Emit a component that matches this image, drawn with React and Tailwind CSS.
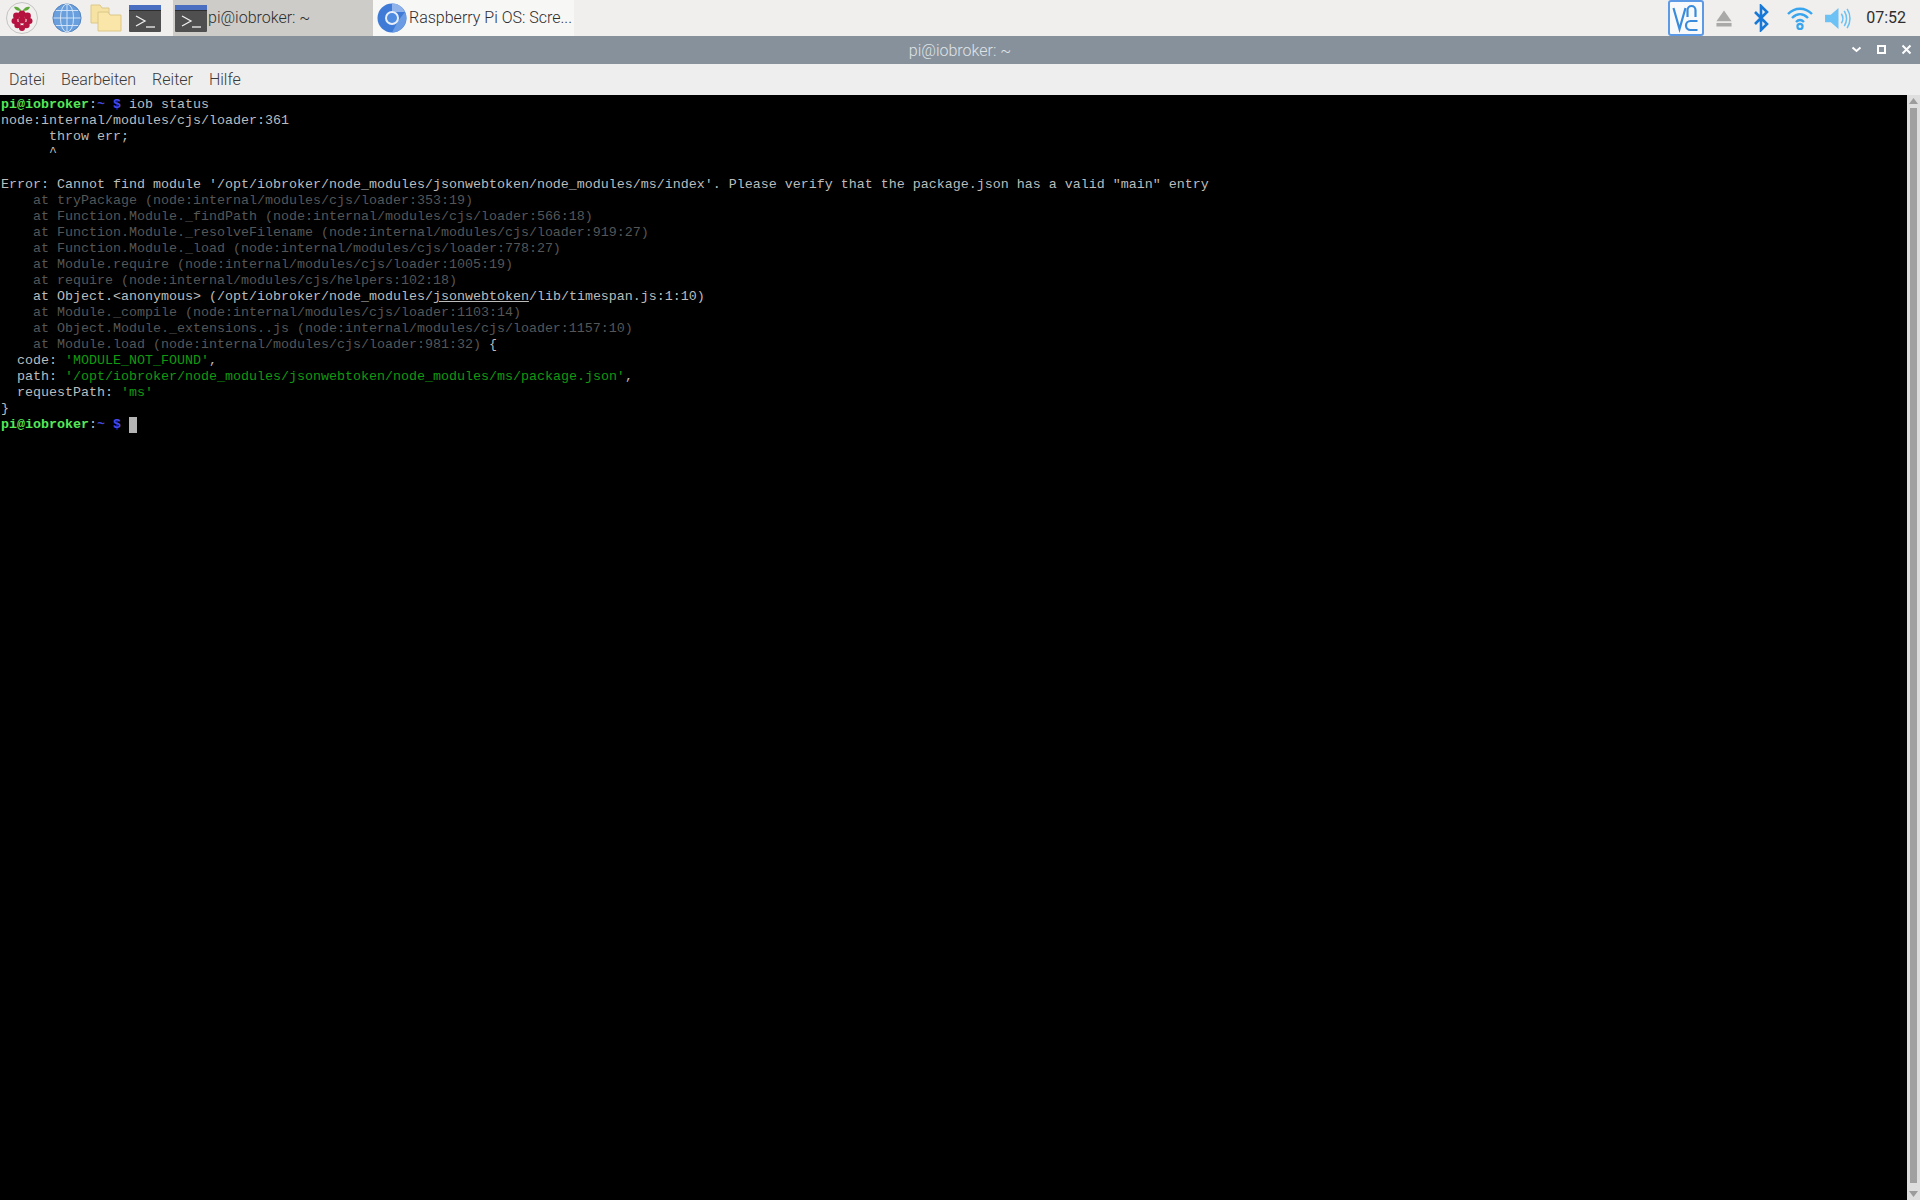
import React from 'react';

const Raspberry = () => (
  <div className="w-[32px] h-[32px] rounded-full bg-[#f1f0ee] border border-[#c4c4c2] flex items-center justify-center">
    <svg width="24" height="28" viewBox="0 0 24 28">
      <path d="M11 6C9 3 6 2 4 3c1 3 4 4 7 4zM13 6c2-3 5-4 7-3-1 3-4 4-7 4z" fill="#5fa83b" />
      <g fill="#b5123f">
        <circle cx="12" cy="10" r="3.6" />
        <circle cx="6.5" cy="12" r="3.4" />
        <circle cx="17.5" cy="12" r="3.4" />
        <circle cx="4.5" cy="17" r="3" />
        <circle cx="19.5" cy="17" r="3" />
        <circle cx="12" cy="16" r="3.6" />
        <circle cx="7.5" cy="21" r="3.2" />
        <circle cx="16.5" cy="21" r="3.2" />
        <circle cx="12" cy="24" r="3" />
      </g>
    </svg>
  </div>
);

const Globe = () => (
  <svg width="30" height="30" viewBox="0 0 32 32">
    <circle cx="16" cy="16" r="15" fill="#6a9fde" stroke="#4f7fb8" />
    <g stroke="#d6e6f8" strokeWidth="1" fill="none">
      <ellipse cx="16" cy="16" rx="7" ry="15" />
      <path d="M16 1v30M1.5 16h29M4 8h24M4 24h24" />
    </g>
  </svg>
);

const Folder = () => (
  <svg width="32" height="28" viewBox="0 0 32 28">
    <path d="M1 1h9l2 3h7v15H1z" fill="#f6e3a4" stroke="#dcc788" />
    <path d="M8 8h10l2 3h11v16H8z" fill="#f9e6a8" stroke="#dcc788" />
  </svg>
);

const TermIcon = () => (
  <svg width="32" height="27" viewBox="0 0 32 27">
    <rect x="0" y="0" width="32" height="27" rx="1" fill="#4f4f4f" />
    <rect x="0" y="0" width="32" height="5" fill="#4a6fc0" />
    <rect x="0" y="5" width="32" height="1" fill="#2e2e2e" />
    <path d="M7 11l9 5-9 5" fill="none" stroke="#eeeeee" strokeWidth="1.3" />
    <path d="M17 22h9" stroke="#eeeeee" strokeWidth="1.3" />
  </svg>
);

const Chromium = () => (
  <svg width="30" height="30" viewBox="0 0 30 30">
    <circle cx="15" cy="15" r="14.5" fill="#3f7ad6" />
    <path d="M15 .5A14.5 14.5 0 0 1 28 9H15z" fill="#8fb3ea" />
    <path d="M28 9a14.5 14.5 0 0 1-13 20.5L21 18z" fill="#6b9be3" />
    <circle cx="15" cy="15" r="7" fill="#e9eff9" />
    <circle cx="15" cy="15" r="5" fill="#4f8be0" />
  </svg>
);

const Vnc = () => (
  <div className="w-[36px] h-[36px] rounded-[3px] border-2 border-[#5c9ae6] bg-[#f8f9fb] flex items-center justify-center">
    <svg width="30" height="30" viewBox="0 0 29 30" fill="none" stroke="#3a8bdc" strokeWidth="2.2">
      <path d="M2 5l6 21 6-21" />
      <path d="M16 14V7a4 4 0 0 1 8 0v7" />
      <path d="M26 18h-7a3.5 3.5 0 0 0 0 9h7" />
    </svg>
  </div>
);

const Eject = () => (
  <svg width="16" height="17" viewBox="0 0 18 18" fill="#a9a9a7">
    <path d="M9 0l8.5 12H.5z" />
    <rect x="0.5" y="14" width="17" height="4" />
  </svg>
);

const Bluetooth = () => (
  <svg width="16" height="28" viewBox="0 0 16 28" fill="none" stroke="#1878d8" strokeWidth="2.6">
    <path d="M2 8l12 12-6 6V2l6 6L2 20" />
  </svg>
);

const Wifi = () => (
  <svg width="26" height="24" viewBox="0 0 26 24" fill="none" stroke="#39a5ee" strokeWidth="2.4">
    <path d="M1 8c7-7 17-7 24 0M5 12c5-5 11-5 16 0M9 16c2.500-2.500 5.500-2.500 8 0" />
    <circle cx="13" cy="20.500" r="2.600" strokeWidth="2.200" />
  </svg>
);

const Volume = () => (
  <svg width="26" height="23" viewBox="0 1 27 24" fill="none">
    <path d="M0 9h6l8-7v22l-8-7H0z" fill="#6cc1f5" />
    <path d="M17 8c2 3 2 7 0 10M20 5c3 5 3 11 0 16M23 3c4 6 4 14 0 20" stroke="#6cc1f5" strokeWidth="1.600" />
  </svg>
);

const WinButtons = () => (
  <div className="flex items-center gap-[12px] text-white">
    <svg width="13" height="13" viewBox="0 0 13 13" fill="none" stroke="#fff" strokeWidth="2"><path d="M2.500 4.500l4 3.500 4-3.500" /></svg>
    <svg width="13" height="13" viewBox="0 0 13 13" fill="none" stroke="#fff" strokeWidth="2"><rect x="3" y="3" width="7" height="7" /></svg>
    <svg width="13" height="13" viewBox="0 0 13 13" fill="none" stroke="#fff" strokeWidth="2"><path d="M2.500 2.500l8 8M10.500 2.500l-8 8" /></svg>
  </div>
);

const Prompt = () => (
  <>
    <span className="text-[#55e855] font-bold">pi@iobroker</span>
    <span className="text-[#c0c0c0]">:</span>
    <span className="text-[#3f46d8] font-bold">~</span>
    <span> </span>
    <span className="text-[#4a4ae8] font-bold">$</span>
    <span> </span>
  </>
);

const Dim = ({ children }) => <div className="text-[#565656] h-[16px]">{children}</div>;
const Line = ({ children }) => <div className="h-[16px]">{children}</div>;
const Green = ({ children }) => <span className="text-[#109a10]">{children}</span>;

const App = () => {
  return (
    <div className="w-[1920px] h-[1200px] flex flex-col overflow-hidden bg-black font-['Roboto',sans-serif] font-light">
      <div className="h-[36px] bg-[#f0efed] flex items-center">
        <div className="w-[52px] pl-[6px]"><Raspberry /></div>
        <Globe />
        <div className="ml-[8px]"><Folder /></div>
        <div className="ml-[7px]"><TermIcon /></div>
        <div className="ml-[12px] w-[200px] h-[36px] bg-[#cdccc8] flex items-center pl-[2px] text-[16px] text-[#2e2e2e] gap-[1px] whitespace-nowrap">
          <TermIcon />
          <span>pi@iobroker: ~</span>
        </div>
        <div className="w-[201px] h-[36px] bg-[#f7f7f6] flex items-center pl-[4px] gap-[2px] text-[16px] text-[#2e2e2e] whitespace-nowrap">
          <Chromium />
          <span>Raspberry Pi OS: Scre...</span>
        </div>
        <div className="ml-auto flex items-center h-[36px]">
          <Vnc />
          <div className="ml-[12px]"><Eject /></div>
          <div className="ml-[21px]"><Bluetooth /></div>
          <div className="ml-[18px]"><Wifi /></div>
          <div className="ml-[12px]"><Volume /></div>
          <span className="ml-[15px] mr-[14px] text-[16px] font-normal text-[#2e2e2e]">07:52</span>
        </div>
      </div>

      <div className="h-[28px] bg-[#87919b] flex items-center justify-center relative text-[16px] text-[#dfe3e7] pt-[1px]">
        <span>pi@iobroker: ~</span>
        <div className="absolute right-[7px] top-[7px]"><WinButtons /></div>
      </div>

      <div className="h-[31px] bg-[#eeeeee] flex items-center pl-[9px] gap-[16px] text-[16px] text-[#3a3a3a]">
        <span>Datei</span>
        <span>Bearbeiten</span>
        <span>Reiter</span>
        <span>Hilfe</span>
      </div>

      <div className="flex-1 flex min-h-0">
        <div className="flex-1 bg-black pt-[2px] pl-[1px] text-[#bcbcbc] font-['Liberation_Mono',monospace] font-normal text-[13.333px] leading-[16px] whitespace-pre">
          <Line><Prompt />iob status</Line>
          <Line>node:internal/modules/cjs/loader:361</Line>
          <Line>      throw err;</Line>
          <Line>      ^</Line>
          <Line> </Line>
          <Line>Error: Cannot find module '/opt/iobroker/node_modules/jsonwebtoken/node_modules/ms/index'. Please verify that the package.json has a valid "main" entry</Line>
          <Dim>    at tryPackage (node:internal/modules/cjs/loader:353:19)</Dim>
          <Dim>    at Function.Module._findPath (node:internal/modules/cjs/loader:566:18)</Dim>
          <Dim>    at Function.Module._resolveFilename (node:internal/modules/cjs/loader:919:27)</Dim>
          <Dim>    at Function.Module._load (node:internal/modules/cjs/loader:778:27)</Dim>
          <Dim>    at Module.require (node:internal/modules/cjs/loader:1005:19)</Dim>
          <Dim>    at require (node:internal/modules/cjs/helpers:102:18)</Dim>
          <Line>    at Object.&lt;anonymous&gt; (/opt/iobroker/node_modules/<span className="underline">jsonwebtoken</span>/lib/timespan.js:1:10)</Line>
          <Dim>    at Module._compile (node:internal/modules/cjs/loader:1103:14)</Dim>
          <Dim>    at Object.Module._extensions..js (node:internal/modules/cjs/loader:1157:10)</Dim>
          <Line><span className="text-[#565656]">    at Module.load (node:internal/modules/cjs/loader:981:32)</span> {'{'}</Line>
          <Line>  code: <Green>'MODULE_NOT_FOUND'</Green>,</Line>
          <Line>  path: <Green>'/opt/iobroker/node_modules/jsonwebtoken/node_modules/ms/package.json'</Green>,</Line>
          <Line>  requestPath: <Green>'ms'</Green></Line>
          <Line>{'}'}</Line>
          <Line><Prompt /><span className="inline-block w-[8px] h-[16px] bg-[#b4b4b4] align-top" /></Line>
        </div>
        <div className="w-[13px] bg-[#dedede] flex flex-col items-center">
          <svg className="mt-[2px]" width="9" height="8" viewBox="0 0 9 8" fill="#9c9c9c"><path d="M4.500 1L9 7H0z" /></svg>
          <div className="mt-[3px] w-[7px] flex-1 bg-[#a0a0a0]" />
          <svg className="mt-[7px] mb-[2px]" width="9" height="8" viewBox="0 0 9 8" fill="#9c9c9c"><path d="M0 1h9L4.500 7z" /></svg>
        </div>
      </div>
    </div>
  );
};

export default App;
